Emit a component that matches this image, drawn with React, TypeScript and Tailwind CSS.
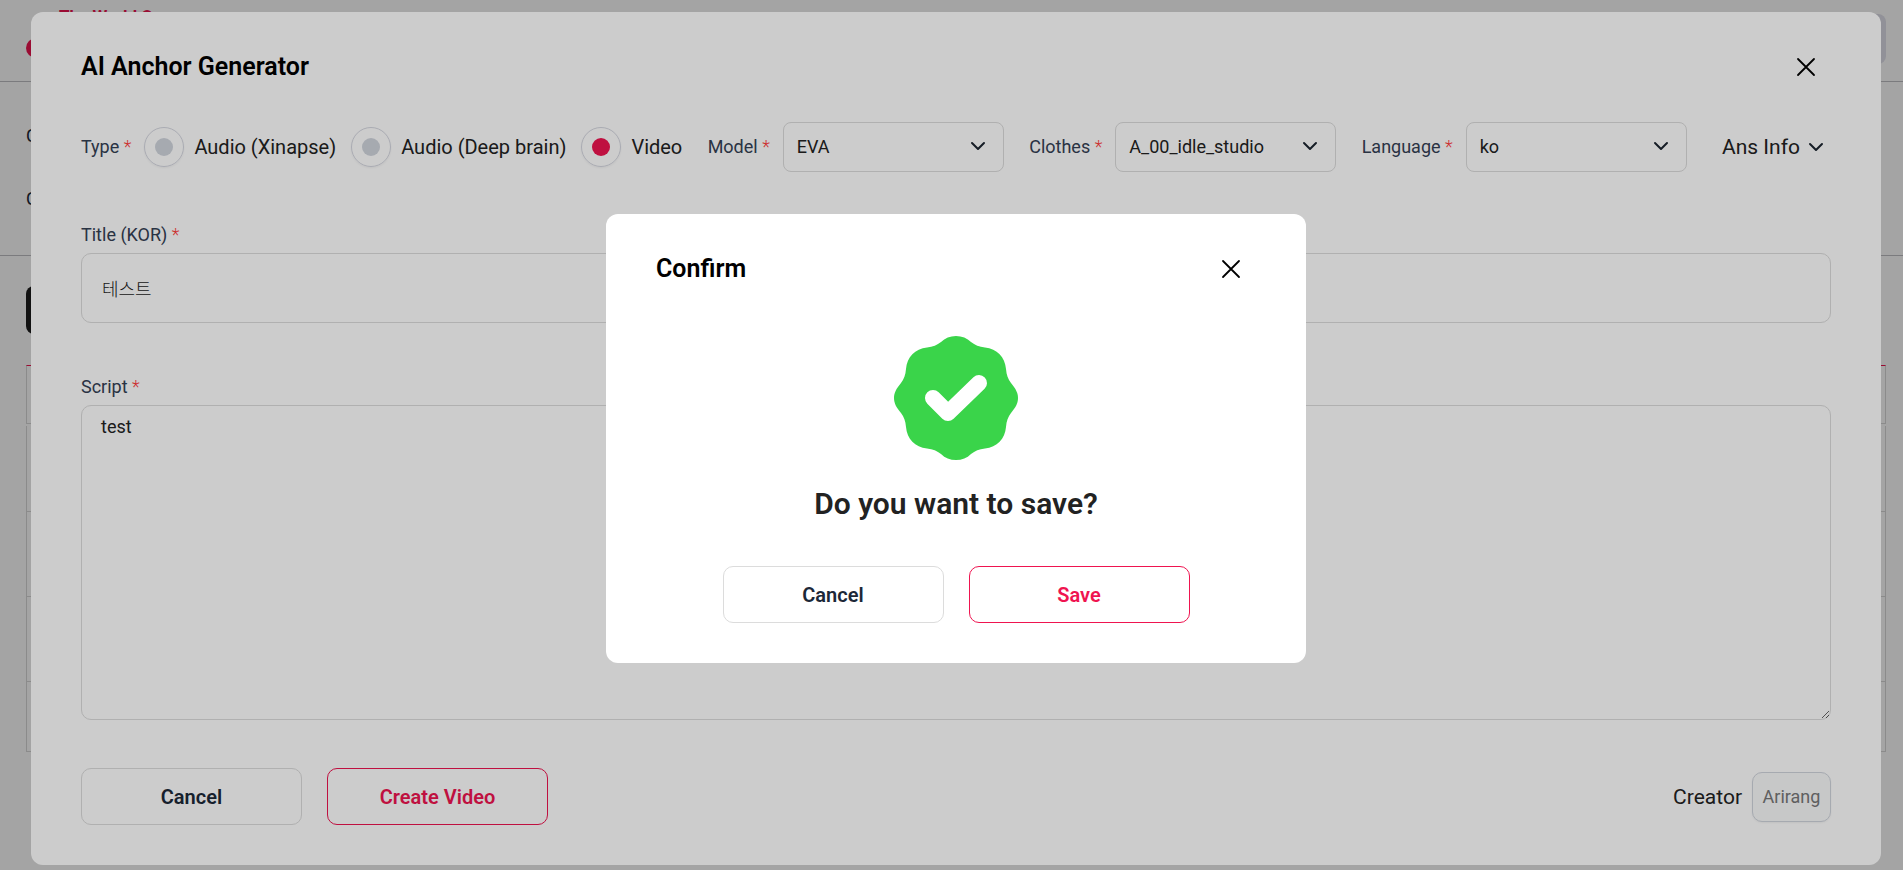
import React, { useState } from 'react';

const TYPES = ['Audio (Xinapse)', 'Audio (Deep brain)', 'Video'];

const SELECTS = [
  { id: 'model', label: 'Model', value: 'EVA', options: ['EVA'] },
  { id: 'clothes', label: 'Clothes', value: 'A_00_idle_studio', options: ['A_00_idle_studio'] },
  { id: 'language', label: 'Language', value: 'ko', options: ['ko', 'en'] },
];

const ROW_HEIGHTS = ['h-[86px]', 'h-[85px]', 'h-[85px]', 'h-[70px]'];

function Required() {
  return <span className="font-light text-[#ff3b3b]">*</span>;
}

function CloseIcon() {
  return (
    <svg width="24" height="24" viewBox="0 0 24 24" fill="none" stroke="#000" strokeWidth="1.8" strokeLinecap="round">
      <path d="M4 4L20 20M20 4L4 20" />
    </svg>
  );
}

function ChevronIcon({ className = '' }: { className?: string }) {
  return (
    <svg className={className} width="16" height="10" viewBox="0 0 16 10" fill="none" stroke="#1c2530" strokeWidth="2" strokeLinecap="round" strokeLinejoin="round">
      <path d="M2 2L8 8L14 2" />
    </svg>
  );
}

function CheckBadge() {
  return (
    <svg width="124" height="124" viewBox="0 0 124 124">
      <path
        fill="#3ad44a"
        d="M62 0C68 0 73 2 77 6C81 9 85 11 91 11.500C103 13 111 21 112 33C112.500 39 114 43 117 47C122 53 124 57 124 62C124 67 122 71 117 77C114 81 112.500 85 112 91C111 103 103 111 91 112.500C85 113 81 115 77 118C73 122 68 124 62 124C56 124 51 122 47 118C43 115 39 113 33 112.500C21 111 13 103 12 91C11.500 85 10 81 7 77C2 71 0 67 0 62C0 57 2 53 7 47C10 43 11.500 39 12 33C13 21 21 13 33 11.500C39 11 43 9 47 6C51 2 56 0 62 0Z"
      />
      <path d="M39 62L54 77L85 47" fill="none" stroke="#fff" strokeWidth="16" strokeLinecap="round" strokeLinejoin="round" />
    </svg>
  );
}

function PageBehind() {
  return (
    <div className="min-h-screen bg-white">
      <header className="flex h-[82px] items-start justify-between border-b border-[#c0c0c4] pr-[17px] pl-[26px]">
        <div className="flex items-start gap-[5px] pt-1.5">
          <span className="mt-8 h-5 w-7 rounded-full bg-[#ef1450]" />
          <span className="text-[17px] leading-5 font-bold text-[#ef1450]">The World On</span>
        </div>
        <button className="mt-3.5 h-[50px] w-32 rounded-lg bg-[#e2e2ec]" aria-label="Account" />
      </header>
      <section className="flex h-[174px] flex-col gap-[39px] border-b border-[#c0c0c4] pt-[42px] pl-[26px] text-lg leading-6 text-[#1c2838]">
        <span>Code</span>
        <span>Creator</span>
      </section>
      <section className="pt-[30px] pr-[17px] pl-[26px]">
        <button className="block h-12 w-36 rounded-lg bg-[#1c1c1c]" aria-label="Create" />
        <div className="mt-[31px] h-[59px] border border-t-[#ef1450] border-[#d8d8d8]" />
        <div className="mt-0.5 border-x border-[#d8d8d8]">
          {ROW_HEIGHTS.map((height, i) => (
            <div key={i} className={`border-b border-[#d8d8d8] ${height}`} />
          ))}
        </div>
      </section>
    </div>
  );
}

function App() {
  const [type, setType] = useState('Video');
  const [title, setTitle] = useState('테스트');
  const [script, setScript] = useState('test');

  return (
    <div className="h-screen overflow-hidden font-[Roboto,'Noto_Sans_CJK_KR',sans-serif] text-[#222]">
      <PageBehind />

      <div className="fixed inset-0 flex items-center justify-center bg-black/20 pt-[7px] pr-[22px] pl-[31px]">
        <div role="dialog" aria-labelledby="generator-title" className="w-full rounded-xl bg-white px-[50px] pt-[31px] pb-10">
          <div className="flex h-12 items-center justify-between pr-[13px]">
            <h1 id="generator-title" className="text-[25px] leading-8 font-semibold text-black">AI Anchor Generator</h1>
            <button aria-label="Close"><CloseIcon /></button>
          </div>

          <div className="mt-[31px] flex items-center justify-between pr-[7px]">
            <fieldset className="flex items-center">
              <legend className="float-left mr-[13px] text-lg leading-6 text-[#344054]">Type <Required /></legend>
              {TYPES.map((name) => (
                <label key={name} className="mr-[15px] flex items-center gap-2.5 text-xl leading-6 last:mr-0">
                  <input
                    type="radio"
                    name="type"
                    checked={type === name}
                    onChange={() => setType(name)}
                    className="grid size-10 appearance-none place-content-center rounded-full border border-[#d5d7e0] shadow-xs before:size-[18px] before:rounded-full before:bg-[#d0d5dd] checked:before:bg-[#ef1450]"
                  />
                  {name}
                </label>
              ))}
            </fieldset>
            {SELECTS.map((s) => (
              <div key={s.id} className="flex items-center gap-[13px]">
                <label htmlFor={s.id} className="text-lg leading-6 text-[#344054]">{s.label} <Required /></label>
                <div className="relative">
                  <select id={s.id} defaultValue={s.value} className="h-[50px] w-[221px] appearance-none rounded-lg border border-[#dcdcdc] px-[13px] text-lg">
                    {s.options.map((o) => <option key={o}>{o}</option>)}
                  </select>
                  <ChevronIcon className="pointer-events-none absolute top-[19px] right-[18px]" />
                </div>
              </div>
            ))}
            <button className="ml-2.5 flex items-center gap-2 text-[21px] leading-6">
              Ans Info <ChevronIcon />
            </button>
          </div>

          <label htmlFor="title" className="mt-[49px] block text-lg leading-7 text-[#344054]">Title (KOR) <Required /></label>
          <input
            id="title"
            value={title}
            onChange={(e) => setTitle(e.target.value)}
            className="mt-1 block h-[70px] w-full rounded-[10px] border border-[#dcdcdc] px-5 text-lg font-light"
          />

          <label htmlFor="script" className="mt-[50px] block text-lg leading-7 text-[#344054]">Script <Required /></label>
          <textarea
            id="script"
            value={script}
            onChange={(e) => setScript(e.target.value)}
            className="mt-1 block h-[315px] w-full rounded-[10px] border border-[#dcdcdc] px-[19px] py-[7px] text-lg leading-7"
          />

          <div className="mt-12 flex items-center justify-between">
            <div className="flex gap-[25px]">
              <button className="h-[57px] w-[221px] rounded-[10px] border border-[#dcdcdc] text-xl font-semibold text-[#1c2838]">Cancel</button>
              <button className="h-[57px] w-[221px] rounded-[10px] border border-[#ef1450] text-xl font-semibold text-[#ef1450]">Create Video</button>
            </div>
            <div className="flex items-center gap-2.5">
              <label htmlFor="creator" className="text-[21px] leading-6">Creator</label>
              <input
                id="creator"
                defaultValue="Arirang"
                disabled
                className="h-[50px] w-[79px] rounded-[10px] border border-[#d0d5dd] bg-[#f9fafb] text-center text-lg text-[#777] shadow-xs"
              />
            </div>
          </div>
        </div>
      </div>

      <div className="fixed inset-0 flex items-center justify-center bg-black/20 pt-[7px] pl-[9px]">
        <div role="alertdialog" aria-labelledby="confirm-title" className="w-[700px] rounded-xl bg-white px-[50px] pt-[31px] pb-10">
          <div className="flex h-12 items-center justify-between pr-[13px]">
            <h2 id="confirm-title" className="text-[25px] leading-8 font-semibold text-black">Confirm</h2>
            <button aria-label="Close"><CloseIcon /></button>
          </div>
          <div className="mt-[43px] flex flex-col items-center">
            <CheckBadge />
            <p className="mt-6 text-3xl leading-10 font-semibold">Do you want to save?</p>
          </div>
          <div className="mt-[42px] flex justify-center gap-[25px]">
            <button className="h-[57px] w-[221px] rounded-[10px] border border-[#dcdcdc] text-xl font-semibold text-[#1c2838]">Cancel</button>
            <button className="h-[57px] w-[221px] rounded-[10px] border border-[#ef1450] text-xl font-semibold text-[#ef1450]">Save</button>
          </div>
        </div>
      </div>
    </div>
  );
}

export default App;
